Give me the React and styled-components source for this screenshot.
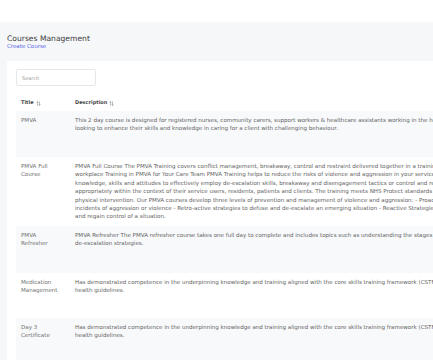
import React from 'react';
import styled, { createGlobalStyle } from 'styled-components';

const GlobalStyle = createGlobalStyle`
    html, body {
        margin: 0;
        padding: 0;
        overflow: hidden;
        background: #fff;
        font-family: "DejaVu Sans", "Noto Sans", sans-serif;
    }
`;

const Page = styled.div`
    width: 433px;
    height: 360px;
    overflow: hidden;
    padding-top: 22px;
    box-sizing: border-box;
`;

const Main = styled.div`
    background: #f6f7f9;
    height: 100%;
    padding: 12px 0 0 7px;
    box-sizing: border-box;
`;

const Heading = styled.div`
    font-size: 7.6px;
    line-height: 9px;
    color: #3b3b3b;
`;

const SubLink = styled.a`
    display: block;
    font-size: 5.5px;
    line-height: 7px;
    color: #5766e8;
    text-decoration: none;
`;

const Card = styled.div`
    margin-top: 11px;
    width: 780px;
    background: #fff;
    padding: 8px 9px;
    border-radius: 2px;
`;

const Search = styled.div`
    width: 80px;
    height: 17px;
    border: 1px solid #e6e7eb;
    border-radius: 2px;
    box-sizing: border-box;
    display: flex;
    align-items: center;
    padding-left: 5px;
    font-size: 5px;
    color: #9a9a9a;
`;

const Table = styled.table`
    margin-top: 8px;
    border-collapse: collapse;
    width: 100%;
`;

const Th = styled.th`
    text-align: left;
    font-size: 5px;
    font-weight: 600;
    color: #474747;
    padding: 0 5px;
    height: 17px;
    width: ${p => p.$w || 'auto'};
    white-space: nowrap;
`;

const Row = styled.tr`
    background: ${p => (p.$striped ? '#f8f9fb' : '#fff')};
    height: ${p => p.$h}px;
`;

const Td = styled.td`
    vertical-align: top;
    padding: 5px 5px;
    font-size: 5.55px;
    line-height: 8.4px;
    color: ${p => (p.$muted ? '#707070' : '#626262')};
    white-space: nowrap;
`;

const SortIcon = () => (
    <svg width="5" height="5" viewBox="0 0 10 10" style={{ marginLeft: 2, verticalAlign: 'middle' }}>
        <path d="M3 9V1M1 3l2-2 2 2M7 1v8M5 7l2 2 2-2" stroke="#777" strokeWidth="1" fill="none" />
    </svg>
);

const courses = [
    {
        title: ['PMVA'],
        h: 46,
        lines: [
            'This 2 day course is designed for registered nurses, community carers, support workers & healthcare assistants working in the healthcare sector who are',
            'looking to enhance their skills and knowledge in caring for a client with challenging behaviour.',
        ],
    },
    {
        title: ['PMVA Full', 'Course'],
        h: 69,
        lines: [
            'PMVA Full Course The PMVA Training covers conflict management, breakaway, control and restraint delivered together in a training course tailored for the',
            'workplace Training in PMVA for Your Care Team PMVA Training helps to reduce the risks of violence and aggression in your service by giving staff the',
            'knowledge, skills and attitudes to effectively employ de-escalation skills, breakaway and disengagement tactics or control and restraint techniques',
            'appropriately within the context of their service users, residents, patients and clients. The training meets NHS Protect standards for promoting safer',
            'physical intervention. Our PMVA courses develop three levels of prevention and management of violence and aggression: - Proactive strategies to reduce',
            'incidents of aggression or violence - Retro-active strategies to defuse and de-escalate an emerging situation - Reactive Strategies to safely intervene',
            'and regain control of a situation.',
        ],
    },
    {
        title: ['PMVA', 'Refresher'],
        h: 47,
        lines: [
            'PMVA Refresher The PMVA refresher course takes one full day to complete and includes topics such as understanding the stages of aggression and',
            'de-escalation strategies.',
        ],
    },
    {
        title: ['Medication', 'Management'],
        h: 45,
        lines: [
            'Has demonstrated competence in the underpinning knowledge and training aligned with the core skills training framework (CSTF) and current',
            'health guidelines.',
        ],
    },
    {
        title: ['Day 3', 'Certificate'],
        h: 45,
        lines: [
            'Has demonstrated competence in the underpinning knowledge and training aligned with the core skills training framework (CSTF) and current',
            'health guidelines.',
        ],
    },
];

function App() {
    return (
        <Page>
            <GlobalStyle />
            <Main>
                <Heading>Courses Management</Heading>
                <SubLink href="#">Create Course</SubLink>
                <Card>
                    <Search>Search</Search>
                    <Table>
                        <thead>
                            <tr>
                                <Th $w="44px">Title<SortIcon /></Th>
                                <Th>Description<SortIcon /></Th>
                            </tr>
                        </thead>
                        <tbody>
                            {courses.map((c, i) => (
                                <Row key={i} $striped={i % 2 === 0} $h={c.h}>
                                    <Td $muted>
                                        {c.title.map((t, j) => (
                                            <div key={j}>{t}</div>
                                        ))}
                                    </Td>
                                    <Td>
                                        {c.lines.map((l, j) => (
                                            <div key={j}>{l}</div>
                                        ))}
                                    </Td>
                                </Row>
                            ))}
                        </tbody>
                    </Table>
                </Card>
            </Main>
        </Page>
    );
}

export default App;
